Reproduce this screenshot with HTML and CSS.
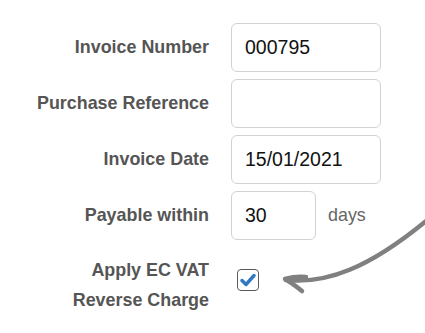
FILE: index.html
```html
<!DOCTYPE html>
<html lang="en">
<head>
    <meta charset="UTF-8">
    <meta name="viewport" content="width=device-width, initial-scale=1.0">
    <title>Invoice Details</title>
    <link rel="stylesheet" href="styles.css">
</head>
<body>
    <form class="invoice-form">
        <div class="row">
            <label class="field-label" for="number">Invoice Number</label>
            <input class="field" type="text" id="number" value="000795">
        </div>
        <div class="row">
            <label class="field-label" for="reference">Purchase Reference</label>
            <input class="field" type="text" id="reference" value="">
        </div>
        <div class="row">
            <label class="field-label" for="date">Invoice Date</label>
            <input class="field" type="text" id="date" value="15/01/2021">
        </div>
        <div class="row">
            <label class="field-label" for="payable">Payable within</label>
            <input class="field field-short" type="text" id="payable" value="30">
            <span class="unit">days</span>
        </div>
        <div class="row row-check">
            <label class="field-label field-label-wrap" for="vat">Apply EC VAT<br>Reverse Charge</label>
            <span class="checkbox" id="vat">
                <svg width="16" height="14" viewBox="0 0 16 14">
                    <path d="M2 7.5 L6 11.5 L14 2.5" fill="none" stroke="#2f79c0" stroke-width="3.4" stroke-linecap="round" stroke-linejoin="round"/>
                </svg>
            </span>
        </div>
    </form>

    <!-- hand drawn arrow pointing at the checkbox -->
    <svg class="arrow" width="425" height="333" viewBox="0 0 425 333">
        <path d="M286 280 C325 284, 368 270, 432 216" fill="none" stroke="#808080" stroke-width="4.5" stroke-linecap="round"/>
        <path d="M306 277 C298 276, 292 277, 285 279 C292 283, 297 287, 302 291" fill="none" stroke="#808080" stroke-width="4.5" stroke-linecap="round" stroke-linejoin="round"/>
    </svg>
</body>
</html>
```

FILE: styles.css
```css
body {
    margin: 0;
    padding: 0;
    background: #fff;
    font-family: "Liberation Sans", Arial, sans-serif;
    font-size: 17.9px;
    color: #555;
}
.invoice-form {
    padding-top: 23px;
    margin: 0;
}
.row {
    display: flex;
    align-items: center;
    margin-bottom: 7px;
}
.field-label {
    width: 209px;
    flex-shrink: 0;
    text-align: right;
    font-weight: bold;
    color: #555;
    margin-right: 22px;
}
.field {
    width: 150px;
    height: 49px;
    box-sizing: border-box;
    padding: 0 0 0 13px;
    border: 1px solid #d2d2d2;
    border-radius: 6px;
    font-family: "Liberation Sans", Arial, sans-serif;
    font-size: 19.5px;
    color: #111;
    outline: none;
}
.field-short {
    width: 85px;
}
.unit {
    margin-left: 12px;
    color: #666;
}
.row-check {
    align-items: flex-start;
    margin-top: 15px;
}
.field-label-wrap {
    line-height: 30px;
}
.checkbox {
    width: 22px;
    height: 22px;
    box-sizing: border-box;
    margin: 14px 0 0 6px;
    border: 1.5px solid #5a5a5a;
    border-radius: 4px;
    display: flex;
    align-items: center;
    justify-content: center;
}
.arrow {
    position: absolute;
    top: 0;
    left: 0;
    pointer-events: none;
}
```
